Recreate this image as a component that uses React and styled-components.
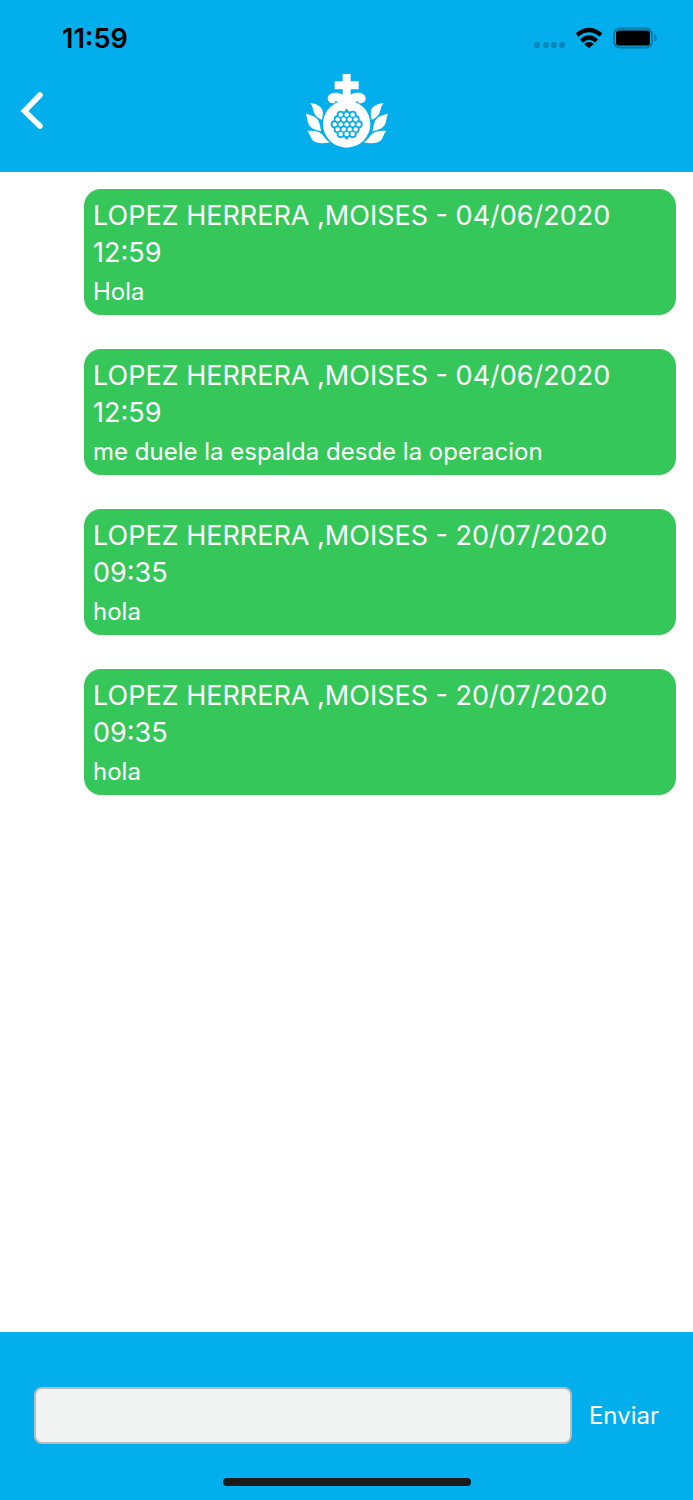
import React, { useState } from "react";
import styled, { createGlobalStyle } from "styled-components";

const messages = [
  { id: 1, author: "LOPEZ HERRERA ,MOISES", date: "04/06/2020 12:59", text: "Hola" },
  {
    id: 2,
    author: "LOPEZ HERRERA ,MOISES",
    date: "04/06/2020 12:59",
    text: "me duele la espalda desde la operacion",
  },
  { id: 3, author: "LOPEZ HERRERA ,MOISES", date: "20/07/2020 09:35", text: "hola" },
  { id: 4, author: "LOPEZ HERRERA ,MOISES", date: "20/07/2020 09:35", text: "hola" },
];

// seeds inside the fruit of the logo: [y, first x, count]
const seedRows = [
  [146, 133, 3],
  [160, 124, 4],
  [175, 115, 5],
  [190, 124, 4],
  [204, 133, 3],
];

const seeds = seedRows.flatMap(([y, x, count]) =>
  Array.from({ length: count }, (_, i) => ({ x: x + i * 18, y }))
);

const Leaves = () => (
  <>
    <path d="M41 112C60 113 74 119 79 134C81 143 78 152 77 161C56 154 53 141 50 129C48 121 45 116 41 112Z" />
    <path d="M28 143C45 147 60 151 67 165C72 176 71 186 75 195C53 192 40 185 35 170C32 158 32 150 28 143Z" />
    <path d="M33 195C50 194 66 194 77 205C85 214 90 224 101 229C82 233 60 234 48 222C42 213 40 203 33 195Z" />
  </>
);

const Logo = () => (
  <svg width="84" height="76" viewBox="26 18 252 228" fill="#fff" role="img" aria-label="Logo">
    <path d="M139 24H163V46H187V70H163V90H139V70H115V46H139Z" />
    <path d="M139 86C130 80 118 79 109 81C98 84 93 92 94 100C96 110 108 115 117 110C113 107 116 104 124 107L130 116H172L178 107C186 104 189 107 185 110C194 115 206 110 208 100C209 92 204 84 193 81C184 79 172 80 163 86Z" />
    <circle cx="151" cy="174" r="71" />
    <g fill="#02aeeb">
      {seeds.map(({ x, y }) => (
        <circle key={`${x}-${y}`} cx={x} cy={y} r="12" />
      ))}
      <circle cx="151" cy="133" r="4" />
      <circle cx="151" cy="217" r="4" />
    </g>
    {seeds.map(({ x, y }) => (
      <circle key={`${x}-${y}`} cx={x} cy={y} r="6.6" />
    ))}
    <Leaves />
    <g transform="translate(303 0) scale(-1 1)">
      <Leaves />
    </g>
  </svg>
);

const StatusIcons = () => (
  <svg width="124" height="24" viewBox="0 0 124 24" aria-hidden="true">
    <g fill="#0287b7">
      <circle cx="3" cy="19" r="3" />
      <circle cx="12" cy="19" r="3" />
      <circle cx="20" cy="19" r="3" />
      <circle cx="28" cy="19" r="3" />
    </g>
    <g fill="none" stroke="#000" strokeWidth="4.4">
      <path d="M43 9Q55 -1 67 9" />
      <path d="M47.5 15Q55 8 62.5 15" />
    </g>
    <path d="M50 18Q55 14 60 18L55 22Z" />
    <rect x="80" y="2.5" width="38" height="19" rx="6" fill="none" stroke="#0278a2" strokeWidth="1.8" />
    <rect x="82" y="4.5" width="34" height="15" rx="3" />
    <path d="M120.5 8Q125 12 120.5 16Z" fill="#0278a2" />
  </svg>
);

const App = () => {
  const [draft, setDraft] = useState("");

  return (
    <Screen>
      <GlobalStyle />
      <Header>
        <StatusBar>
          <Time>11:59</Time>
          <StatusIcons />
        </StatusBar>
        <NavBar>
          <BackButton aria-label="Volver">
            <svg width="24" height="38" viewBox="0 0 24 38" fill="none" stroke="#fff" strokeWidth="5.6" strokeLinecap="round">
              <path d="M20 4L4.5 20L20 35" />
            </svg>
          </BackButton>
          <Logo />
        </NavBar>
      </Header>
      <MessageList>
        {messages.map((message) => (
          <Message key={message.id}>
            <MessageTitle>{`${message.author} - ${message.date}`}</MessageTitle>
            <MessageText>{message.text}</MessageText>
          </Message>
        ))}
      </MessageList>
      <Footer>
        <MessageForm onSubmit={(ev) => ev.preventDefault()}>
          <Input
            aria-label="Mensaje"
            value={draft}
            onChange={(ev) => setDraft(ev.target.value)}
          />
          <SendButton type="submit">Enviar</SendButton>
        </MessageForm>
        <HomeIndicator />
      </Footer>
    </Screen>
  );
};

export default App;

const GlobalStyle = createGlobalStyle`
  * {
    box-sizing: border-box;
  }

  body {
    margin: 0;
    background: #fff;
    font-family: Inter, "Liberation Sans", sans-serif;
  }

  button {
    padding: 0;
    border: none;
    background: none;
    color: inherit;
    font: inherit;
    cursor: pointer;
  }
`;

const Screen = styled.div`
  display: flex;
  flex-direction: column;
  min-height: 100vh;
`;

const Header = styled.header`
  padding-bottom: 24px;
  background-color: #02aeeb;
`;

const StatusBar = styled.div`
  display: flex;
  justify-content: space-between;
  align-items: center;
  height: 72px;
  padding: 4px 35px 0 62px;
`;

const Time = styled.span`
  font-size: 27px;
  font-weight: 600;
`;

const NavBar = styled.div`
  display: grid;
  grid-template-columns: 1fr auto 1fr;
  align-items: center;
  padding: 0 20px;
`;

const BackButton = styled.button`
  display: flex;
  justify-self: start;
`;

const MessageList = styled.main`
  display: flex;
  flex: 1;
  flex-direction: column;
  gap: 34px;
  padding: 17px 17px 34px 84px;
`;

const Message = styled.article`
  padding: 8px 9px 6px;
  border-radius: 17px;
  background-color: #35c759;
  color: #fff;
`;

const MessageTitle = styled.h2`
  margin: 0 0 4px;
  font-size: 27px;
  font-weight: 400;
  line-height: 37px;
`;

const MessageText = styled.p`
  margin: 0;
  font-size: 24px;
  line-height: 34px;
`;

const Footer = styled.footer`
  display: flex;
  flex-direction: column;
  align-items: center;
  gap: 34px;
  padding: 55px 34px 14px;
  background-color: #02aeeb;
`;

const MessageForm = styled.form`
  display: flex;
  align-items: center;
  gap: 17px;
  width: 100%;
`;

const Input = styled.input`
  flex: 1;
  min-width: 0;
  height: 57px;
  padding: 0 12px;
  border: 2px solid #b9bcbd;
  border-radius: 8px;
  background-color: #f0f3f2;
  font: inherit;
  font-size: 24px;
`;

const SendButton = styled.button`
  color: #fff;
  font-size: 24px;
`;

const HomeIndicator = styled.div`
  width: 248px;
  height: 8px;
  border-radius: 4px;
  background-color: #1a1a1a;
`;
